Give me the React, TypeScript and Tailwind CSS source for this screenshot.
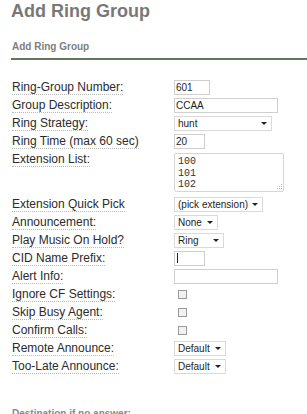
import React from "react";

function Arrow() {
  return (
    <svg width="6" height="3" viewBox="0 0 6 3" className="shrink-0">
      <polygon points="0,0 6,0 3,3" fill="#222" />
    </svg>
  );
}

function Row({ label, children }: { label: string; children?: React.ReactNode }) {
  return (
    <div className="flex h-[18px]">
      <div className="flex w-[162px] shrink-0 items-start">
        <span className="mt-[3px] whitespace-nowrap border-b border-dotted border-[#b8b8b8] text-[12px] leading-[13px] text-[#2b2b2b]">
          {label}
        </span>
      </div>
      <div className="flex items-center">{children}</div>
    </div>
  );
}

function TextBox({ w, value, caret }: { w: string; value?: string; caret?: boolean }) {
  return (
    <div
      className={`flex h-[15px] ${w} items-center border border-[#cfcfcf] bg-white pl-[1px] text-[10px] leading-[13px] text-[#1e1e1e]`}
    >
      {value}
      {caret && <div className="ml-[1px] h-[10px] w-[1px] bg-[#222]" />}
    </div>
  );
}

function Select({ w, value }: { w: string; value: string }) {
  return (
    <div
      className={`flex h-[15px] ${w} items-center justify-between border border-[#dadada] bg-white pl-[3px] pr-[4px] text-[10px] leading-[13px] text-[#1e1e1e]`}
    >
      <span className="whitespace-nowrap">{value}</span>
      <Arrow />
    </div>
  );
}

function Check() {
  return <div className="ml-[4px] h-[9px] w-[9px] border border-[#9a9a9a] bg-[#f1f1f1]" />;
}

export default function App() {
  return (
    <div className="h-[414px] w-[307px] overflow-hidden bg-white font-['Liberation_Sans',Arial,sans-serif]">
      <div className="pl-[11px] pt-[1px] text-[18px] font-bold leading-[20px] text-[#787878]">
        Add Ring Group
      </div>
      <div className="mt-[20px] pl-[12px] text-[10px] font-bold leading-[12px] text-[#7e7e7e]">
        Add Ring Group
      </div>
      <div className="ml-[11px] mt-[5px] h-[2px] bg-[#62785a]" />

      <div className="mt-[18px] pl-[12px]">
        <Row label="Ring-Group Number:">
          <TextBox w="w-[36px]" value="601" />
        </Row>
        <Row label="Group Description:">
          <TextBox w="w-[104px]" value="CCAA" />
        </Row>
        <Row label="Ring Strategy:">
          <Select w="w-[98px]" value="hunt" />
        </Row>
        <Row label="Ring Time (max 60 sec)">
          <TextBox w="w-[31px]" value="20" />
        </Row>
        <div className="flex h-[45px]">
          <div className="flex w-[162px] shrink-0 items-start">
            <span className="mt-[3px] whitespace-nowrap border-b border-dotted border-[#b8b8b8] text-[12px] leading-[13px] text-[#2b2b2b]">
              Extension List:
            </span>
          </div>
          <div className="relative mt-[3px] h-[39px] w-[110px] rounded-[2px] border border-[#d6d6d6] bg-white pl-[3px] pt-[2px] font-['Liberation_Mono',monospace] text-[10px] leading-[11.5px] text-[#333]">
            <div>100</div>
            <div>101</div>
            <div>102</div>
            <svg width="6" height="6" viewBox="0 0 6 6" className="absolute bottom-[1px] right-[1px]">
              <rect x="5" y="0" width="1" height="1" fill="#bbb" />
              <rect x="3" y="2" width="1" height="1" fill="#bbb" />
              <rect x="5" y="2" width="1" height="1" fill="#bbb" />
              <rect x="1" y="4" width="1" height="1" fill="#bbb" />
              <rect x="3" y="4" width="1" height="1" fill="#bbb" />
              <rect x="5" y="4" width="1" height="1" fill="#bbb" />
            </svg>
          </div>
        </div>
        <Row label="Extension Quick Pick">
          <Select w="w-[89px]" value="(pick extension)" />
        </Row>
        <Row label="Announcement:">
          <Select w="w-[44px]" value="None" />
        </Row>
        <Row label="Play Music On Hold?">
          <Select w="w-[50px]" value="Ring" />
        </Row>
        <Row label="CID Name Prefix:">
          <TextBox w="w-[31px]" caret />
        </Row>
        <Row label="Alert Info:">
          <TextBox w="w-[104px]" />
        </Row>
        <Row label="Ignore CF Settings:">
          <Check />
        </Row>
        <Row label="Skip Busy Agent:">
          <Check />
        </Row>
        <Row label="Confirm Calls:">
          <Check />
        </Row>
        <Row label="Remote Announce:">
          <Select w="w-[52px]" value="Default" />
        </Row>
        <Row label="Too-Late Announce:">
          <Select w="w-[52px]" value="Default" />
        </Row>
        <div className="mt-[33px] text-[10px] font-bold leading-[12px] text-[#8a8a8a]">
          Destination if no answer:
        </div>
      </div>
    </div>
  );
}
